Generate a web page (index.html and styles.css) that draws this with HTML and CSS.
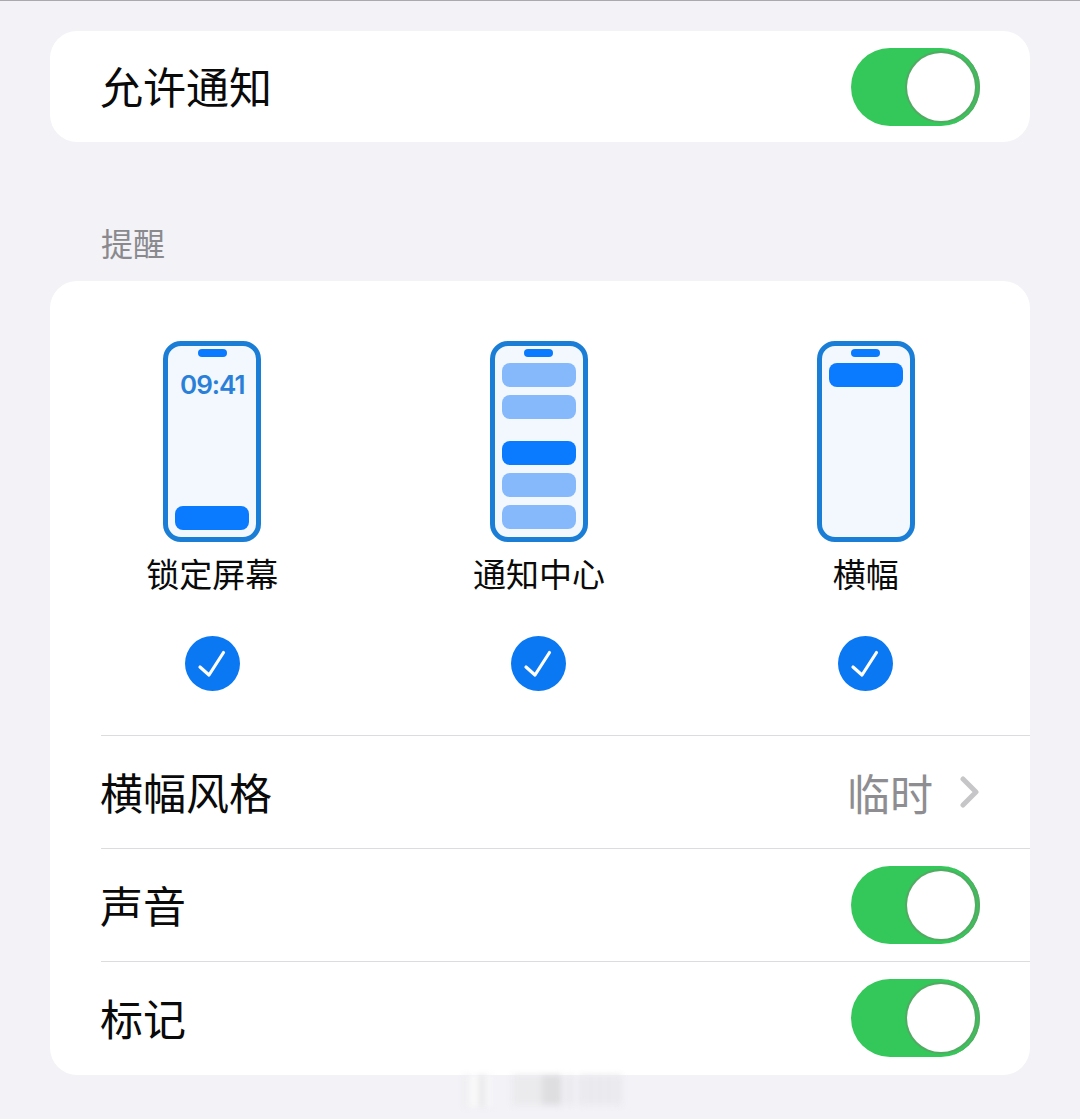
FILE: index.html
```html
<!DOCTYPE html>
<html lang="zh">
<head>
  <meta charset="utf-8">
  <title>通知设置</title>
  <link rel="stylesheet" href="styles.css">
</head>
<body>
  <main class="page">
    <section class="card top-card">
      <div class="row">
        <span class="row-label">允许通知</span>
        <span class="toggle"><span class="knob"></span></span>
      </div>
    </section>

    <h2 class="section-title">提醒</h2>

    <section class="card alerts-card">
      <div class="alert-styles">
        <div class="alert-option">
          <div class="phone phone-lock">
            <span class="notch"></span>
            <span class="clock">09:41</span>
            <span class="bar bar-on bar-bottom"></span>
          </div>
          <span class="option-label">锁定屏幕</span>
          <svg class="check" viewBox="0 0 55 55">
            <circle cx="27.5" cy="27.5" r="27.5" fill="#0a78f2"/>
            <polyline points="15,31 24,39 38.5,16.5" fill="none" stroke="#fff" stroke-width="3.2" stroke-linecap="round" stroke-linejoin="round"/>
          </svg>
        </div>
        <div class="alert-option">
          <div class="phone">
            <span class="notch"></span>
            <span class="bar bar-off"></span>
            <span class="bar bar-off"></span>
            <span class="bar bar-on bar-gap"></span>
            <span class="bar bar-off"></span>
            <span class="bar bar-off"></span>
          </div>
          <span class="option-label">通知中心</span>
          <svg class="check" viewBox="0 0 55 55">
            <circle cx="27.5" cy="27.5" r="27.5" fill="#0a78f2"/>
            <polyline points="15,31 24,39 38.5,16.5" fill="none" stroke="#fff" stroke-width="3.2" stroke-linecap="round" stroke-linejoin="round"/>
          </svg>
        </div>
        <div class="alert-option">
          <div class="phone">
            <span class="notch"></span>
            <span class="bar bar-on"></span>
          </div>
          <span class="option-label">横幅</span>
          <svg class="check" viewBox="0 0 55 55">
            <circle cx="27.5" cy="27.5" r="27.5" fill="#0a78f2"/>
            <polyline points="15,31 24,39 38.5,16.5" fill="none" stroke="#fff" stroke-width="3.2" stroke-linecap="round" stroke-linejoin="round"/>
          </svg>
        </div>
      </div>

      <div class="row row-line">
        <span class="row-label">横幅风格</span>
        <span class="row-value">
          临时
          <svg class="chevron" viewBox="0 0 20 32">
            <polyline points="3,3 16,16 3,29" fill="none" stroke="#c6c6c8" stroke-width="5" stroke-linecap="round" stroke-linejoin="round"/>
          </svg>
        </span>
      </div>
      <div class="row row-line">
        <span class="row-label">声音</span>
        <span class="toggle"><span class="knob"></span></span>
      </div>
      <div class="row row-line">
        <span class="row-label">标记</span>
        <span class="toggle"><span class="knob"></span></span>
      </div>
    </section>
  </main>

  <!-- blurred watermark at the bottom -->
  <div class="watermark">
    <span class="mark mark-light"></span>
    <span class="mark mark-wide"></span>
    <span class="mark mark-dark"></span>
    <span class="mark mark-thin"></span>
    <span class="mark mark-end"></span>
  </div>
</body>
</html>
```

FILE: styles.css
```css
html, body {
  margin: 0;
  padding: 0;
}

body {
  position: relative;
  height: 1118px;
  overflow: hidden;
  background-color: #f2f2f7;
  border-top: 1px solid #a9a9ae;
  font-family: "Noto Sans CJK SC", "Noto Sans", sans-serif;
  color: #0a0a0a;
}

.page {
  padding: 30px 50px 0;
}

.card {
  background-color: #fff;
  border-radius: 27px;
  overflow: hidden;
}

.top-card .row {
  height: 111px;
}

.alerts-card {
  padding-bottom: 1px;
}

.section-title {
  margin: 81px 0 20px 51px;
  font-size: 32px;
  line-height: 38px;
  font-weight: 400;
  color: #8a8a8e;
}

.row {
  display: flex;
  align-items: center;
  justify-content: space-between;
  margin-left: 51px;
  padding-right: 50px;
  height: 113px;
}

.row-line {
  border-top: 1px solid #dcdcde;
  height: 112px;
}

.row-label {
  margin: -2px 0 0 -1px;
  font-size: 43px;
  line-height: 60px;
}

.top-card .row-label {
  margin-top: -4px;
}

.row-value {
  display: flex;
  align-items: center;
  gap: 27px;
  font-size: 43px;
  line-height: 60px;
  color: #8e8e92;
}

.chevron {
  width: 20px;
  height: 32px;
}

.toggle {
  display: flex;
  align-items: center;
  justify-content: flex-end;
  box-sizing: border-box;
  width: 129px;
  height: 78px;
  padding-right: 5px;
  border-radius: 39px;
  background-color: #34c759;
  box-shadow: inset -3px 0 0 -1px #55ab63;
}

.knob {
  width: 68px;
  height: 68px;
  border-radius: 50%;
  background-color: #fff;
  box-shadow: 0 0 0 2px #52aa63;
}

.alert-styles {
  display: grid;
  grid-template-columns: repeat(3, 1fr);
  margin-left: -1px;
  padding: 60px 1px 44px 0;
}

.alert-option {
  display: flex;
  flex-direction: column;
  align-items: center;
}

.phone {
  display: flex;
  flex-direction: column;
  align-items: center;
  gap: 8px;
  box-sizing: border-box;
  width: 98px;
  height: 201px;
  padding-top: 3px;
  border: 5px solid #1b7ed6;
  border-radius: 18px;
  background-color: #f2f8fe;
}

.notch {
  width: 29px;
  height: 8px;
  margin-bottom: -2px;
  border-radius: 4px;
  background-color: #0a7aff;
}

.clock {
  margin-top: 7px;
  font-family: Inter, "Liberation Sans", sans-serif;
  font-size: 26px;
  line-height: 30px;
  font-weight: 600;
  letter-spacing: -1px;
  color: #2a80d8;
}

.bar {
  flex: none;
  width: 74px;
  height: 24px;
  border-radius: 8px;
}

.bar-on {
  background-color: #0a7aff;
}

.bar-off {
  background-color: #85b9fb;
}

.bar-gap {
  margin-top: 14px;
}

.bar-bottom {
  margin-top: auto;
  margin-bottom: 7px;
}

.option-label {
  margin-top: 9px;
  font-size: 33px;
  line-height: 44px;
}

.check {
  width: 55px;
  height: 55px;
  margin-top: 41px;
}

.watermark {
  position: absolute;
  top: 1074px;
  left: 460px;
  display: flex;
  align-items: flex-start;
  height: 32px;
  filter: blur(3px);
}

.mark {
  height: 30px;
}

.mark-light {
  width: 28px;
  height: 32px;
  margin-left: 4px;
  background: linear-gradient(to right, #ebebee, #fff 40%, #e2e2e5 65%, #fcfcfd 85%, #f2f2f7);
}

.mark-wide {
  width: 30px;
  margin-left: 20px;
  background-color: #ebebee;
}

.mark-dark {
  width: 20px;
  background-color: #dedee1;
}

.mark-thin {
  width: 4px;
  margin-left: 6px;
  background-color: #e4e4e7;
}

.mark-end {
  width: 42px;
  margin-left: 8px;
  background: repeating-linear-gradient(to right, #e4e4e8 0 4px, #f0f0f4 4px 9px);
}
```
